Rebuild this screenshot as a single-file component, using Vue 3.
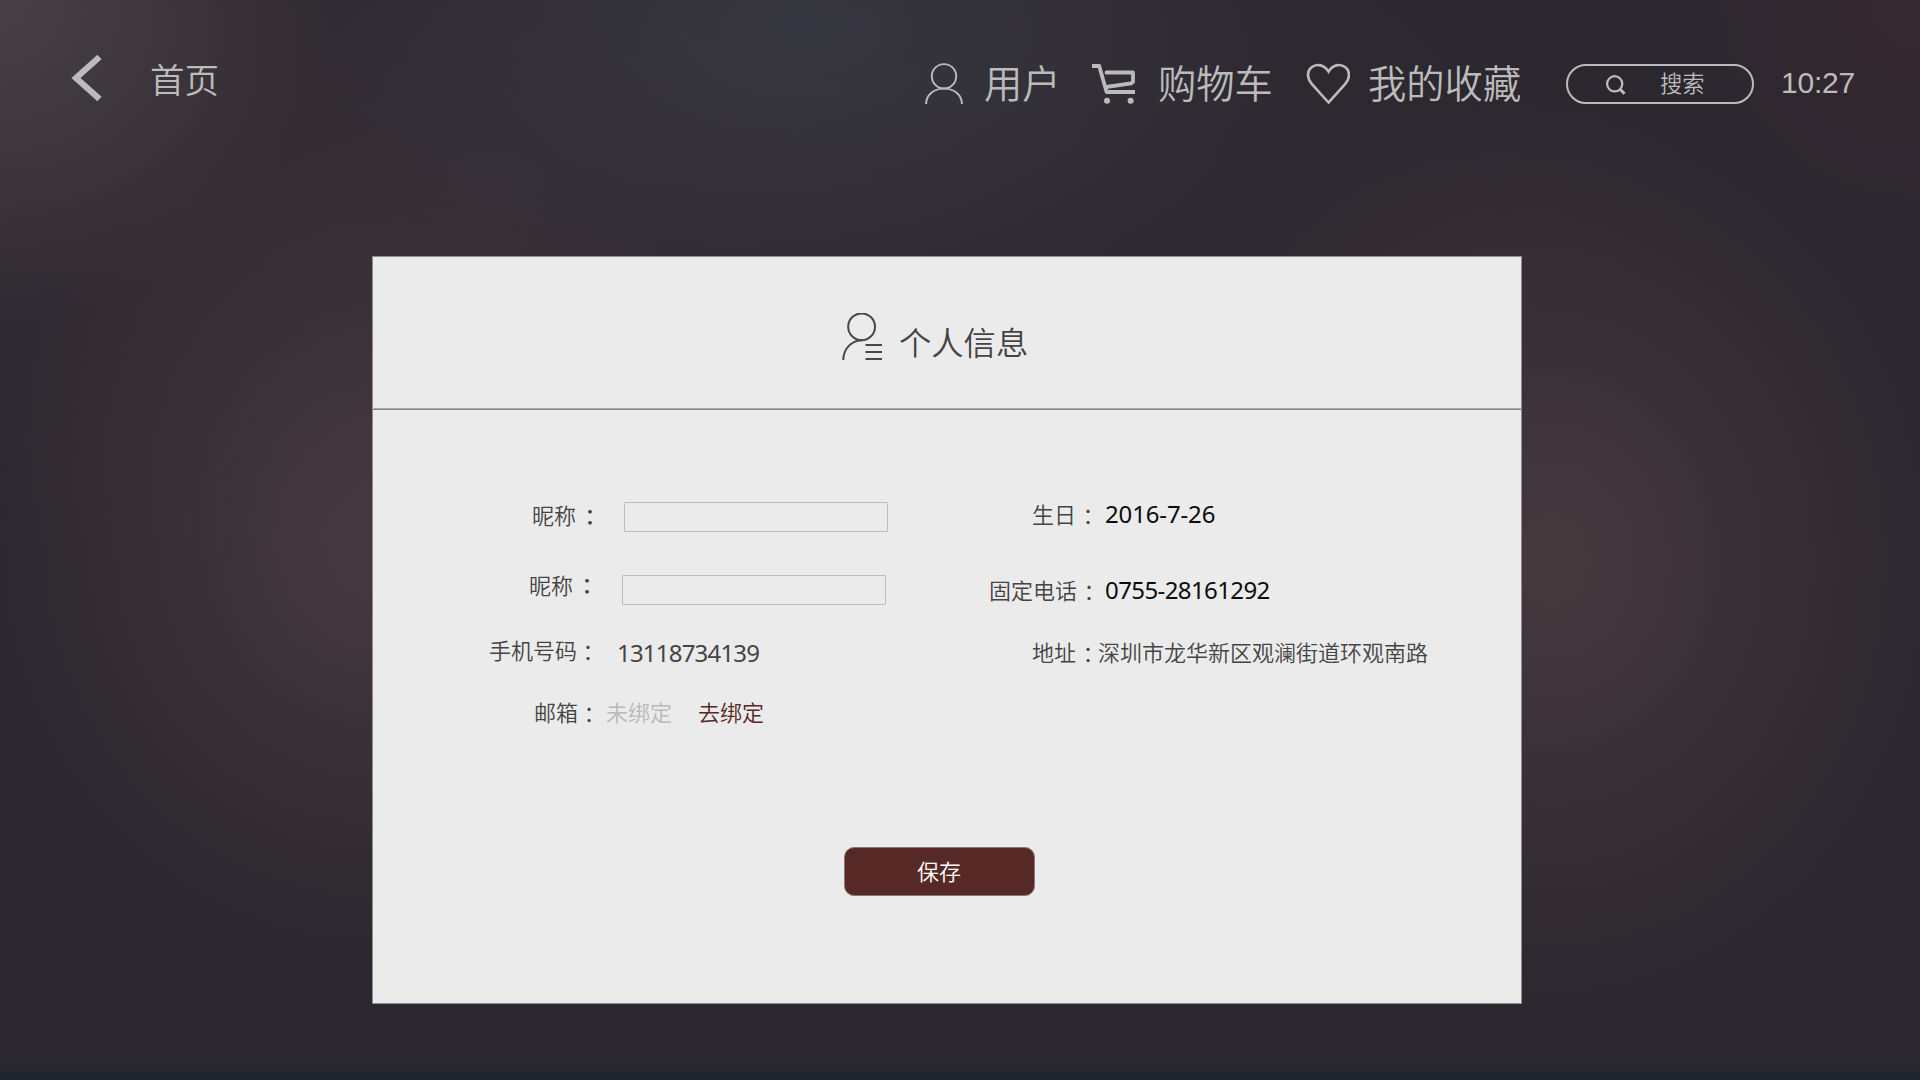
<script setup>
const leftRows = [
  { id: 'nick-a', label: '昵称', kind: 'input' },
  { id: 'nick-b', label: '昵称', kind: 'input' },
  { id: 'phone', label: '手机号码', kind: 'number', value: '13118734139' },
  { id: 'mail', label: '邮箱', kind: 'bind', value: '未绑定', action: '去绑定' },
]
const rightRows = [
  { id: 'birth', label: '生日', kind: 'number', value: '2016-7-26' },
  { id: 'tel', label: '固定电话', kind: 'number', value: '0755-28161292' },
  { id: 'addr', label: '地址', kind: 'text', value: '深圳市龙华新区观澜街道环观南路' },
]
</script>

<template>
  <div class="screen" lang="zh-CN">
    <header class="topbar">
      <svg class="back" width="32" height="50" viewBox="0 0 32 50">
        <path d="M28.5 4 L5 25 L28.5 46" fill="none" stroke="#bbb" stroke-width="6.2" />
      </svg>
      <span class="home">首页</span>

      <nav class="nav">
        <svg class="i-user" width="38" height="42" viewBox="0 0 38 42" fill="none" stroke="#bbb" stroke-width="1.9">
          <circle cx="19" cy="13.3" r="12.2" />
          <path d="M1.1 41 C1.1 32 8.5 25.6 19 25.6 S36.9 32 36.9 41" />
        </svg>
        <span class="t-user">用户</span>
        <svg class="i-cart" width="44" height="42" viewBox="0 0 44 42" fill="none" stroke="#bbb" stroke-width="3.8" stroke-linejoin="round">
          <path d="M0 3 H7.2 L14.6 29 H43" />
          <path d="M14.5 9.5 H41 V19 L39 20.3 L14 24" stroke-linecap="round" />
          <circle cx="15" cy="37.8" r="3" fill="#bbb" stroke="none" />
          <circle cx="38.6" cy="37.8" r="3" fill="#bbb" stroke="none" />
        </svg>
        <span class="t-cart">购物车</span>
        <svg class="i-heart" width="44" height="42" viewBox="-0.5 -0.3 44 42" fill="none" stroke="#bbb" stroke-width="2.6">
          <path d="M22 39.2 L5.2 20.5 C0 14.5 .7 7.5 4.8 4.2 C10.5 -.2 18 1.5 22 8.4 C26 1.5 33.5 -.2 39.2 4.2 C43.3 7.5 44 14.5 38.8 20.5 Z" />
        </svg>
        <span class="t-fav">我的收藏</span>
      </nav>

      <div class="search">
        <svg width="20" height="20" viewBox="0 0 20 20" fill="none" stroke="#bbb" stroke-width="2.2">
          <circle cx="8.7" cy="8.8" r="7.6" />
          <path d="M13.9 14 L18.5 18.8" stroke-width="3" />
        </svg>
        <span>搜索</span>
      </div>
      <time class="clock">10:27</time>
    </header>

    <main class="card">
      <div class="card-head">
        <svg width="42" height="50" viewBox="0 0 42 50" fill="none" stroke="#484848" stroke-width="2">
          <circle cx="19.6" cy="13.8" r="13.4" />
          <path d="M19.6 27.2 C9 27.6 1.6 36 1.2 47" />
          <path d="M23.5 32 H40 M23.5 39 H40 M23.5 46 H40" />
        </svg>
        <h1>个人信息</h1>
      </div>

      <div class="card-body">
        <section class="col left">
          <div v-for="r in leftRows" :key="r.id" class="row" :class="r.id">
            <span class="label">{{ r.label }}</span><span class="colon">：</span>
            <input v-if="r.kind === 'input'" class="box" type="text" />
            <span v-else-if="r.kind === 'number'" class="num">{{ r.value }}</span>
            <template v-else>
              <span class="muted">{{ r.value }}</span>
              <a class="link">{{ r.action }}</a>
            </template>
          </div>
        </section>
        <section class="col right">
          <div v-for="r in rightRows" :key="r.id" class="row" :class="r.id">
            <span class="label">{{ r.label }}</span><span class="colon">：</span>
            <span :class="r.kind === 'number' ? 'num' : 'text'">{{ r.value }}</span>
          </div>
        </section>
      </div>
      <button class="save">保存</button>
    </main>
    <footer class="strip"></footer>
  </div>
</template>

<style>
body {
  margin: 0;
  background: #2b262e;
}
</style>

<style scoped>
.screen {
  width: 1920px;
  height: 1080px;
  overflow: hidden;
  display: flex;
  flex-direction: column;
  font-family: "Noto Sans CJK SC", sans-serif;
  font-weight: 350;
  color: #444;
  white-space: nowrap;
  background:
    radial-gradient(ellipse 330px 320px at 0 0, rgba(80, 72, 78, 0.75), rgba(80, 72, 78, 0) 100%),
    radial-gradient(ellipse 500px 280px at 800px 30px, rgba(56, 58, 69, 0.75), rgba(56, 58, 69, 0) 100%),
    radial-gradient(ellipse 240px 240px at 1920px 0, rgba(60, 41, 49, 0.7), rgba(60, 41, 49, 0) 100%),
    radial-gradient(ellipse 400px 420px at 380px 545px, rgba(73, 60, 65, 0.9), rgba(73, 60, 65, 0) 100%),
    radial-gradient(ellipse 400px 460px at 1550px 560px, rgba(73, 59, 64, 0.9), rgba(73, 59, 64, 0) 100%),
    radial-gradient(ellipse 1200px 420px at 500px 160px, rgba(55, 47, 54, 0.8), rgba(55, 47, 54, 0) 100%),
    #2b272e;
}

.topbar {
  height: 256px;
  flex: none;
  display: flex;
  align-items: flex-start;
  color: #bbb;
}
.back {
  margin: 53px 0 0 71px;
}
.home {
  margin: 58px 0 0 47px;
  width: 69px;
  font-size: 34.6px;
  line-height: 40px;
}
.nav {
  display: flex;
  align-items: flex-start;
  margin: 63px 0 0 706px;
  font-size: 38.3px;
  line-height: 40px;
}
.nav span {
  margin-top: -1px;
}
.t-user {
  width: 76px;
  margin-left: 21px;
}
.i-cart {
  margin-left: 32px;
}
.t-cart {
  width: 114px;
  margin-left: 22px;
}
.i-heart {
  margin-left: 34px;
}
.t-fav {
  width: 152px;
  margin-left: 18px;
}
.search {
  box-sizing: border-box;
  width: 188px;
  height: 40px;
  margin: 64px 0 0 46px;
  padding-left: 38px;
  display: flex;
  align-items: center;
  border: 2px solid #bbb;
  border-radius: 20px;
  font-size: 22.3px;
  line-height: 24px;
}
.search svg {
  margin-top: 1px;
}
.search span {
  margin: -4px 0 0 34px;
}
.clock {
  margin: 66px 0 0 27px;
  font: 30px/34px "Liberation Sans", Arial, sans-serif;
  letter-spacing: -0.2px;
}

.card {
  width: 1150px;
  height: 748px;
  flex: none;
  margin-left: 372px;
  background: #ebebeb;
  box-shadow: inset 0 0 0 1px #8e8c8e;
  display: flex;
  flex-direction: column;
}
.card-head {
  box-sizing: border-box;
  height: 154px;
  flex: none;
  display: flex;
  align-items: flex-start;
  padding: 56px 0 0 470px;
  border-bottom: 1px solid #868686;
  box-shadow: inset 0 -1px 0 #ababab;
}
.card-head svg {
  margin-top: 1px;
}
.card-head h1 {
  margin: 9px 0 0 15px;
  font-size: 32.3px;
  line-height: 40px;
  font-weight: 350;
}
.card-body {
  height: 437px;
  flex: none;
  display: flex;
  font-size: 22px;
  line-height: 30px;
}
.col {
  padding-top: 88px;
}
.left {
  width: 600px;
}
.right {
  width: 550px;
}
.row {
  height: 30px;
  display: flex;
  align-items: flex-start;
}
.label {
  flex: none;
}
.colon {
  flex: none;
  width: 22px;
  margin-top: 2px;
  font-family: "Noto Sans CJK TC", sans-serif;
  font-weight: 350;
}
.nick-a {
  padding-left: 160px;
  padding-top: 1px;
}
.nick-b {
  padding-left: 157px;
  padding-top: 40px;
}
.nick-a .colon,
.nick-b .colon {
  margin: 1px 0 0 3px;
  font-weight: 500;
}
.nick-b .colon {
  margin-top: 0;
}
.box {
  box-sizing: border-box;
  width: 264px;
  height: 30px;
  margin: 3px 0 0 23px;
  padding: 0 8px;
  border: 1px solid #bdbdbd;
  border-radius: 1px;
  background: transparent;
  font: inherit;
  outline: none;
}
.nick-b .box {
  margin: 6px 0 0 24px;
}
.phone {
  padding-left: 117px;
  padding-top: 35px;
}
.mail {
  padding-left: 162px;
  padding-top: 32px;
}
.num {
  margin-top: 1px;
  font-family: "Noto Sans", sans-serif;
  font-size: 24px;
  font-weight: 400;
  letter-spacing: -0.8px;
}
.phone .num {
  margin: 4px 0 0 18px;
}
.muted {
  margin-left: 6px;
  color: #b9b9b9;
}
.link {
  margin-left: 26px;
  color: #572826;
}
.birth {
  padding-left: 60px;
}
.tel {
  padding-left: 17px;
  padding-top: 46px;
}
.addr {
  padding-left: 60px;
  padding-top: 32px;
}
.right .colon {
  margin-left: 1px;
}
.right .num {
  margin-left: 5px;
  color: #0c0c0c;
}
.right .text {
  margin-left: -1px;
}
.birth .num {
  margin-left: 6px;
  letter-spacing: -0.15px;
}
.tel .num {
  letter-spacing: -0.6px;
}
.save {
  box-sizing: border-box;
  width: 191px;
  height: 49px;
  margin: 0 0 0 472px;
  padding: 0 1px 4px 0;
  border: 1px solid #8c7876;
  border-radius: 10px;
  background: #572926;
  color: #fff;
  font: inherit;
  font-size: 22px;
  line-height: 30px;
}
.strip {
  height: 9px;
  flex: none;
  margin-top: auto;
  background: #1f252f;
}
</style>
